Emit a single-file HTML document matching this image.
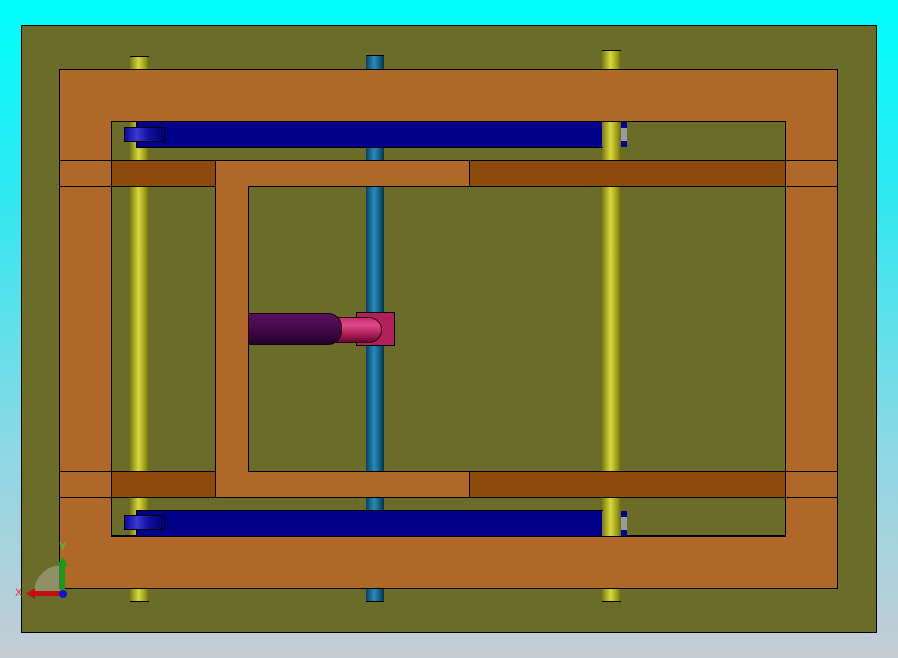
<!DOCTYPE html>
<html><head><meta charset="utf-8"><style>
html,body{margin:0;padding:0}
body{width:898px;height:658px;position:relative;overflow:hidden;background:linear-gradient(#00ffff 0%,#30e8f0 30%,#90d8e4 70%,#c4ccd4 100%);font-family:"Liberation Sans",sans-serif}
.a{position:absolute;box-sizing:border-box}
.ol{background:#6b6b2a}
.or{background:#b0682a;border:1px solid #000}
.br{background:#8c4a0c;border:1px solid #000}
.ry{background:linear-gradient(90deg,#7a7a10,#d8d840 45%,#9a9a18 80%,#6a6a10);border-top:1px solid #000;border-bottom:1px solid #000}
.rb{background:linear-gradient(90deg,#0a4060,#2a8ab8 45%,#105878 80%,#083048);border-top:1px solid #000;border-bottom:1px solid #000}
.bb{background:#00008a;border:1px solid #000}
.cap{background:linear-gradient(90deg,#0a0aa0,#3a3ad0 30%,#1010a0 60%,#000070);border:1px solid #000}
</style></head><body>
<div class="a ol" style="left:21px;top:25px;width:856px;height:608px;border:1px solid #000"></div>
<!-- rods -->
<div class="a ry" style="left:130px;top:56px;width:19px;height:546px"></div>
<div class="a ry" style="left:602px;top:50px;width:19px;height:552px"></div>
<div class="a rb" style="left:366px;top:55px;width:18px;height:547px"></div>
<!-- outer orange frame -->
<div class="a or" style="left:59px;top:69px;width:779px;height:53px"></div>
<div class="a or" style="left:59px;top:535px;width:779px;height:54px"></div>
<div class="a or" style="left:59px;top:121px;width:53px;height:415px;border-top:none;border-bottom:none"></div>
<div class="a or" style="left:785px;top:121px;width:53px;height:415px;border-top:none;border-bottom:none"></div>
<div class="a" style="left:111px;top:121px;width:675px;height:416px;border:1px solid #000"></div>
<!-- side cross lines -->
<div class="a or" style="left:59px;top:160px;width:53px;height:27px"></div>
<div class="a or" style="left:785px;top:160px;width:53px;height:27px"></div>
<div class="a or" style="left:59px;top:471px;width:53px;height:27px"></div>
<div class="a or" style="left:785px;top:471px;width:53px;height:27px"></div>
<!-- brown bars -->
<div class="a br" style="left:111px;top:160px;width:105px;height:27px"></div>
<div class="a br" style="left:469px;top:160px;width:317px;height:27px"></div>
<div class="a br" style="left:111px;top:471px;width:105px;height:27px"></div>
<div class="a br" style="left:469px;top:471px;width:317px;height:27px"></div>
<!-- inner U -->
<div class="a or" style="left:215px;top:160px;width:255px;height:27px"></div>
<div class="a or" style="left:215px;top:471px;width:255px;height:27px"></div>
<div class="a or" style="left:215px;top:186px;width:34px;height:286px;border-top:none;border-bottom:none"></div>
<div class="a" style="left:248px;top:186px;width:538px;height:286px;border:1px solid #000"></div>
<!-- blue cylinders -->
<div class="a bb" style="left:136px;top:121px;width:467px;height:27px"></div>
<div class="a cap" style="left:124px;top:127px;width:41px;height:15px"></div>
<div class="a ry" style="left:602px;top:122px;width:19px;height:25px;border:none"></div>
<div class="a" style="left:621px;top:122px;width:6px;height:25px;background:linear-gradient(#00008a 0 6px,#9a9aa0 6px 19px,#00008a 19px)"></div>
<div class="a bb" style="left:136px;top:510px;width:467px;height:27px"></div>
<div class="a cap" style="left:124px;top:515px;width:41px;height:15px"></div>
<div class="a ry" style="left:602px;top:511px;width:19px;height:25px;border:none"></div>
<div class="a" style="left:621px;top:511px;width:6px;height:25px;background:linear-gradient(#00008a 0 6px,#9a9aa0 6px 19px,#00008a 19px)"></div>
<!-- pneumatic cylinder -->
<div class="a" style="left:356px;top:312px;width:39px;height:34px;background:#b0205a;border:1px solid #000"></div>
<div class="a" style="left:336px;top:317px;width:46px;height:26px;background:linear-gradient(#c03070,#e04888 30%,#a01850 75%,#600a30);border-radius:0 13px 13px 0;border:1px solid #300"></div>
<div class="a" style="left:248px;top:313px;width:94px;height:32px;background:linear-gradient(#5a1060,#4a0a50 40%,#300538 80%,#200228);border-radius:0 14px 14px 0;border:1px solid #200"></div>
<!-- axes -->
<svg class="a" style="left:14px;top:535px" width="60" height="70" viewBox="0 0 60 70">
<path d="M48 30 A28 28 0 0 0 20 58 L48 58 Z" fill="#a8a890" opacity="0.6"/>
<rect x="46" y="30" width="5" height="28" fill="#1a9a1a"/>
<path d="M43 31 L48.5 22 L54 31 Z" fill="#1a9a1a"/>
<rect x="20" y="56" width="28" height="5" fill="#c01010"/>
<path d="M21 53 L12 58.5 L21 64 Z" fill="#c01010"/>
<circle cx="49" cy="59" r="4" fill="#1010d0"/>
<text x="45" y="15" font-size="11" fill="#30e030" font-family="Liberation Sans">Y</text>
<text x="1" y="61" font-size="11" fill="#e03030" font-family="Liberation Sans">X</text>
</svg>
</body></html>
